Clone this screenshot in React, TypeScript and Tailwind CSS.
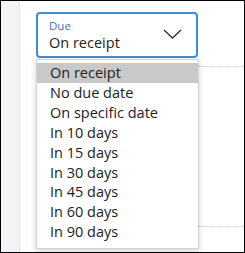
import React from "react";

const items = [
  "On receipt",
  "No due date",
  "On specific date",
  "In 10 days",
  "In 15 days",
  "In 30 days",
  "In 45 days",
  "In 60 days",
  "In 90 days",
];

export default function App() {
  return (
    <div
      className="w-[245px] h-[253px] border border-black bg-white flex overflow-hidden"
      style={{ fontFamily: '"Open Sans", "Noto Sans", sans-serif' }}
    >
      <div className="w-[19px] shrink-0 bg-[#f4f4f6] border-r border-[#e4e4e6]" />
      <div className="relative flex-1">
        <div className="ml-[16px] mt-[11px] w-[162px] h-[46px] border-2 border-[#3a8fd6] rounded-[4px] flex items-center pl-[11px] pr-[14px]">
          <div className="flex-1 flex flex-col">
            <span className="text-[11.5px] leading-[14px] text-[#3178b8]">Due</span>
            <span className="text-[14.5px] leading-[19px] text-[#222]">On receipt</span>
          </div>
          <svg width="19" height="10" viewBox="0 0 19 10" fill="none" className="mb-[2px]">
            <path d="M1 1 L9.5 9 L18 1" stroke="#333" strokeWidth="1.4" />
          </svg>
        </div>
        <div className="absolute left-[179px] right-0 top-[65px] border-t border-dotted border-[#c8c8c8]" />
        <div className="absolute left-[179px] right-0 top-[225px] border-t border-dotted border-[#c8c8c8]" />
        <div className="absolute left-[16px] top-[58px] w-[163px] h-[190px] bg-white border border-[#d4d4d4] shadow-[0_2px_6px_rgba(0,0,0,0.18)] pt-[3px]">
          {items.map((it, i) => (
            <div
              key={it}
              className={`h-[19.9px] flex items-center pl-[13px] text-[14.5px] text-[#222] ${i === 0 ? "bg-[#c9c9c9]" : ""}`}
            >
              {it}
            </div>
          ))}
        </div>
      </div>
    </div>
  );
}
